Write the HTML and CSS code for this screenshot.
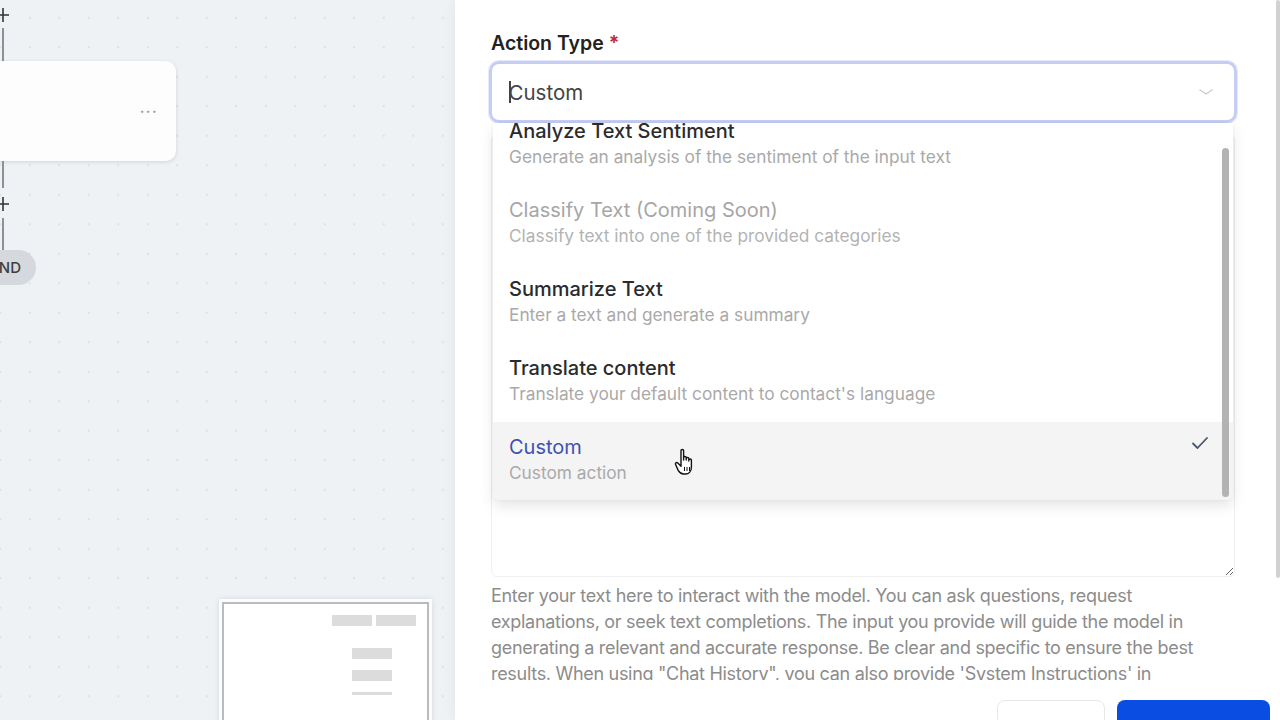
FILE: index.html
```html
<!DOCTYPE html>
<html lang="en">
<head>
  <meta charset="UTF-8" />
  <title>Workflow - Action</title>
  <link rel="stylesheet" href="styles.css">
</head>
<body>
  <div class="app">
    <!-- Flow canvas -->
    <div class="canvas">
      <svg class="plus plus-top" width="12" height="14" viewBox="0 0 12 14">
        <path d="M3 0 V14 M-3 7 H9" stroke="#333" stroke-width="1.6"/>
      </svg>
      <span class="edge edge-1"></span>
      <div class="node">
        <span class="node-menu">&middot;&middot;&middot;</span>
      </div>
      <span class="edge edge-2"></span>
      <svg class="plus plus-mid" width="12" height="14" viewBox="0 0 12 14">
        <path d="M3 0 V14 M-3 7 H9" stroke="#333" stroke-width="1.6"/>
      </svg>
      <span class="edge edge-3"></span>
      <div class="end-pill">END</div>

      <div class="minimap">
        <div class="minimap-inner">
          <div class="mm-row">
            <span class="mm-bar"></span>
            <span class="mm-bar"></span>
          </div>
          <span class="mm-bar mm-block"></span>
          <span class="mm-bar mm-block"></span>
          <span class="mm-bar mm-thin"></span>
        </div>
      </div>
    </div>

    <!-- Side panel -->
    <div class="panel">
      <label class="field-label">Action Type <span class="req">*</span></label>
      <div class="select">
        <span class="select-value"><span class="caret"></span>Custom</span>
        <svg class="chevron" width="16" height="10" viewBox="0 0 16 10">
          <path d="M2 3 L8 7 L14 3" fill="none" stroke="#c8cbd0" stroke-width="1.4" stroke-linecap="round"/>
        </svg>
      </div>

      <textarea class="prompt" readonly></textarea>
      <p class="hint">Enter your text here to interact with the model. You can ask questions, request explanations, or seek text completions. The input you provide will guide the model in generating a relevant and accurate response. Be clear and specific to ensure the best results. When using "Chat History", you can also provide 'System Instructions' in order to set the context of the conversation.</p>

      <div class="footer">
        <button class="btn btn-light"></button>
        <button class="btn btn-primary"></button>
      </div>

      <!-- Dropdown -->
      <div class="dropdown">
        <div class="options">
          <div class="option">
            <div class="opt-title">Analyze Text Sentiment</div>
            <div class="opt-desc">Generate an analysis of the sentiment of the input text</div>
          </div>
          <div class="option disabled">
            <div class="opt-title">Classify Text (Coming Soon)</div>
            <div class="opt-desc">Classify text into one of the provided categories</div>
          </div>
          <div class="option">
            <div class="opt-title">Summarize Text</div>
            <div class="opt-desc">Enter a text and generate a summary</div>
          </div>
          <div class="option">
            <div class="opt-title">Translate content</div>
            <div class="opt-desc">Translate your default content to contact's language</div>
          </div>
          <div class="option selected">
            <div class="opt-title">Custom</div>
            <div class="opt-desc">Custom action</div>
            <svg class="check" width="18" height="14" viewBox="0 0 18 14">
              <path d="M2 7.5 L6.5 12 L16 2" fill="none" stroke="#4a5568" stroke-width="1.8" stroke-linecap="round" stroke-linejoin="round"/>
            </svg>
          </div>
        </div>
        <span class="thumb"></span>
      </div>

      <svg class="pointer" width="26" height="30" viewBox="0 0 26 30">
        <path d="M8 3.5c0-1.4 2.6-1.4 2.6 0V13l0-2.5c0-1.4 2.6-1.4 2.6 0V13v-1.5c0-1.4 2.6-1.4 2.6 0V14v-1c0-1.4 2.6-1.4 2.6 0v7c0 4-2.4 7-6 7h-2c-2.6 0-3.8-1.4-5.2-3.6L2.6 17.5c-.8-1.3 1-2.6 2.2-1.4L8 19.2z" fill="#fff" stroke="#111" stroke-width="1.4" stroke-linejoin="round"/>
        <path d="M11.5 20v4 M14 20v4 M16.5 20v4" stroke="#111" stroke-width="1"/>
      </svg>

      <span class="panel-scroll"></span>
    </div>
  </div>
</body>
</html>
```

FILE: styles.css
```css
* {
  box-sizing: border-box;
}

html, body {
  margin: 0;
  height: 100%;
  overflow: hidden;
}

body {
  font-family: Inter, "Noto Sans", Arial, sans-serif;
  background: #eef2f5;
  color: #2a2a2a;
}

.app {
  display: flex;
  width: 1280px;
  height: 720px;
}

/* Canvas */
.canvas {
  position: relative;
  width: 455px;
  flex-shrink: 0;
  overflow: hidden;
  background-color: #eef2f5;
  background-image: radial-gradient(circle, #dbe0e5 1px, transparent 1.3px);
  background-size: 29.5px 29.5px;
  background-position: 15px 3px;
}

.plus {
  position: absolute;
  left: 0;
}

.plus-top { top: 8px; }
.plus-mid { top: 197px; }

.edge {
  position: absolute;
  left: 2px;
  width: 1.5px;
  background: #8d9197;
}

.edge-1 { top: 28px; height: 33px; }
.edge-2 { top: 161px; height: 27px; }
.edge-3 { top: 218px; height: 32px; }

.node {
  position: absolute;
  left: -40px;
  top: 61px;
  width: 216px;
  height: 100px;
  background: #fdfdfd;
  border-radius: 10px;
  box-shadow: 0 1px 4px rgba(0, 0, 0, 0.12);
}

.node-menu {
  position: absolute;
  right: 18px;
  top: 40px;
  font-size: 18px;
  letter-spacing: 1px;
  color: #9a9da2;
}

.end-pill {
  position: absolute;
  left: -40px;
  top: 250px;
  width: 76px;
  height: 35px;
  padding-right: 15px;
  border-radius: 18px;
  background: #d5d8dc;
  color: #3d3d3d;
  font-size: 15px;
  font-weight: 500;
  line-height: 35px;
  text-align: right;
}

.minimap {
  position: absolute;
  left: 219px;
  top: 599px;
  width: 213px;
  height: 140px;
  padding: 3px;
  background: #fbfcfd;
  box-shadow: 0 0 6px rgba(0, 0, 0, 0.1);
}

.minimap-inner {
  display: flex;
  flex-direction: column;
  align-items: flex-end;
  gap: 11px;
  height: 100%;
  padding: 11px 11px 0 0;
  border: 2px solid #b9bbbe;
  border-bottom: none;
  background: #fff;
}

.mm-row {
  display: flex;
  gap: 4px;
  margin-bottom: 11px;
}

.mm-bar {
  display: block;
  width: 40px;
  height: 11px;
  background: #dcdcdc;
}

.mm-block {
  margin-right: 24px;
}

.mm-thin {
  height: 3px;
  margin-right: 24px;
}

/* Panel */
.panel {
  position: relative;
  flex: 1;
  display: flex;
  flex-direction: column;
  padding: 31px 43px 0 34px;
  background: #fff;
  box-shadow: -3px 0 10px rgba(0, 0, 0, 0.04);
}

.panel > * {
  flex-shrink: 0;
}

.field-label {
  font-size: 19.5px;
  font-weight: 600;
  line-height: 24px;
  color: #222;
  margin: 0 0 6px 2px;
}

.req {
  color: #c0263a;
}

.select {
  display: flex;
  align-items: center;
  justify-content: space-between;
  height: 62px;
  padding: 0 20px 0 17px;
  border: 3px solid #c6cdf2;
  border-radius: 10px;
  box-shadow: 0 0 0 1px #e6e9fa;
}

.select-value {
  font-size: 20.5px;
  color: #444;
  display: flex;
  align-items: center;
}

.caret {
  display: inline-block;
  width: 1.5px;
  height: 22px;
  margin-right: -2px;
  background: #444;
}

.prompt {
  height: 442px;
  margin: 12px 2px 0;
  border: 1px solid #efefef;
  border-radius: 6px;
  resize: vertical;
  background: #fff;
}

.hint {
  width: 706px;
  height: 97px;
  overflow: hidden;
  margin: 6px 0 0 2px;
  font-size: 18px;
  line-height: 26px;
  color: #8c8c8c;
  letter-spacing: -0.3px;
}

.footer {
  display: flex;
  justify-content: flex-end;
  gap: 12px;
  margin-top: 20px;
  margin-right: -33px;
}

.btn {
  height: 44px;
  border-radius: 8px;
  font-family: inherit;
  font-size: 16px;
}

.btn-light {
  width: 108px;
  background: #fff;
  border: 1px solid #e5e7eb;
}

.btn-primary {
  width: 153px;
  background: #0a4de2;
  border: none;
}

/* Dropdown */
.dropdown {
  position: absolute;
  left: 38px;
  top: 123px;
  width: 740px;
  height: 377px;
  overflow: hidden;
  background: #fff;
  border-radius: 0 0 6px 6px;
  box-shadow: 0 6px 14px rgba(0, 0, 0, 0.1), 0 0 3px rgba(0, 0, 0, 0.06);
}

.options {
  margin-top: -17px;
}

.option {
  position: relative;
  height: 79px;
  padding: 13px 16px 0;
}

.opt-title {
  font-size: 20px;
  font-weight: 500;
  line-height: 24px;
  color: #2b2b2b;
}

.opt-desc {
  margin-top: 4px;
  font-size: 17.3px;
  line-height: 20px;
  color: #a9a9a9;
}

.option.disabled .opt-title {
  color: #a6a6a6;
  font-weight: 400;
}

.option.disabled .opt-desc {
  color: #b3b3b3;
}

.option.selected {
  background: #f4f4f5;
}

.option.selected .opt-title {
  color: #3c53b0;
  font-weight: 400;
}

.check {
  position: absolute;
  right: 24px;
  top: 14px;
}

.thumb {
  position: absolute;
  right: 4px;
  top: 25px;
  width: 7px;
  height: 349px;
  border-radius: 4px;
  background: #b3b3b3;
}

.pointer {
  position: absolute;
  left: 218px;
  top: 447px;
}

.panel-scroll {
  position: absolute;
  right: 0;
  top: 0;
  width: 4px;
  height: 578px;
  background: #d2d2d2;
  border-radius: 2px;
}
```
